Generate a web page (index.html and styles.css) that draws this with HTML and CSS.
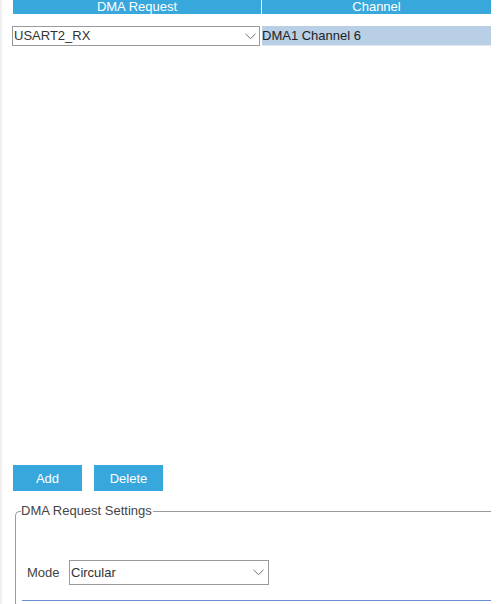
FILE: index.html
```html
<!DOCTYPE html>
<html>
<head>
<meta charset="utf-8">
<link rel="stylesheet" href="styles.css">
</head>
<body>
<div class="app">
  <div class="table">
    <div class="head">
      <div class="th th-req">DMA Request</div>
      <div class="th th-ch">Channel</div>
    </div>
    <div class="row">
      <div class="select sel-req">
        <span class="sel-text">USART2_RX</span>
        <svg class="chev" width="11" height="7" viewBox="0 0 11 7"><path d="M0.5 0.8 L5.5 5.6 L10.5 0.8" fill="none" stroke="#777" stroke-width="1"/></svg>
      </div>
      <div class="cell-ch">DMA1 Channel 6</div>
    </div>
  </div>
  <div class="buttons">
    <button class="btn">Add</button>
    <button class="btn">Delete</button>
  </div>
  <fieldset class="settings">
    <legend class="legend">DMA Request Settings</legend>
    <div class="mode-row">
      <span class="mode-label">Mode</span>
      <div class="select sel-mode">
        <span class="sel-text">Circular</span>
        <div class="mode-btn">
          <svg width="11" height="7" viewBox="0 0 11 7"><path d="M0.5 0.8 L5.5 5.6 L10.5 0.8" fill="none" stroke="#777" stroke-width="1"/></svg>
        </div>
      </div>
    </div>
    <div class="blue-line"></div>
  </fieldset>
</div>
</body>
</html>
```

FILE: styles.css
```css
* { box-sizing: border-box; }
html, body {
  margin: 0;
  padding: 0;
  background: #ffffff;
}
body {
  font-family: "Liberation Sans", Arial, sans-serif;
  font-size: 13px;
  color: #333;
  width: 500px;
  height: 604px;
  overflow: hidden;
}
.app {
  height: 604px;
  border-left: 2px solid #f0f0f0;
  display: flex;
  flex-direction: column;
}
.table {
  height: 463px;
  display: flex;
  flex-direction: column;
}
.head {
  display: flex;
  height: 14px;
  margin-left: 11px;
  gap: 1px;
}
.th {
  background: #38a8dc;
  color: #fff;
  font-size: 13px;
  line-height: 14px;
  text-align: center;
  overflow: hidden;
}
.th-req { width: 248px; }
.th-ch { width: 229px; }
.row {
  display: flex;
  margin-top: 12px;
  margin-left: 10px;
  height: 20px;
}
.select {
  border: 1px solid #9a9a9a;
  background: #fff;
  display: flex;
  align-items: center;
  position: relative;
}
.sel-req {
  width: 248px;
  height: 20px;
  padding-left: 1px;
}
.sel-text {
  flex: 1;
  font-size: 13px;
  color: #333;
  line-height: 18px;
}
.chev {
  margin-right: 3px;
  margin-top: 1px;
}
.cell-ch {
  width: 229px;
  margin-left: 2px;
  height: 20px;
  background: #b8cfe6;
  border-bottom: 1px solid #dfe8f2;
  line-height: 19px;
  padding-left: 0;
  font-size: 13px;
  color: #222;
}
.buttons {
  display: flex;
  gap: 12px;
  margin-left: 11px;
  height: 26px;
  margin-top: 2px;
}
.btn {
  width: 69px;
  height: 26px;
  border: none;
  background: #38a8dc;
  color: #fff;
  font-family: "Liberation Sans", Arial, sans-serif;
  font-size: 13px;
  padding: 0;
  margin: 0;
}
.settings {
  margin: 13px 9px 0 13px;
  padding: 0 0 0 6px;
  border: none;
  border-top: 1px solid #9a9a9a;
  border-left: 1px solid #9a9a9a;
  border-top-left-radius: 5px;
  flex: 1;
  min-width: 0;
}
.legend {
  padding: 0 1px 0 0;
  margin-left: -1px;
  font-size: 13px;
  color: #444;
  line-height: 14px;
}
.mode-row {
  display: flex;
  align-items: center;
  margin-top: 42px;
  height: 25px;
}
.mode-label {
  width: 47px;
  padding-left: 5px;
  font-size: 13px;
  color: #444;
}
.sel-mode {
  width: 200px;
  height: 25px;
  padding-left: 1px;
}
.mode-btn {
  width: 20px;
  height: 23px;
  display: flex;
  align-items: center;
  justify-content: center;
}
.blue-line {
  margin-top: 15px;
  margin-left: 0;
  height: 1px;
  background: #6b8fd4;
}
```
